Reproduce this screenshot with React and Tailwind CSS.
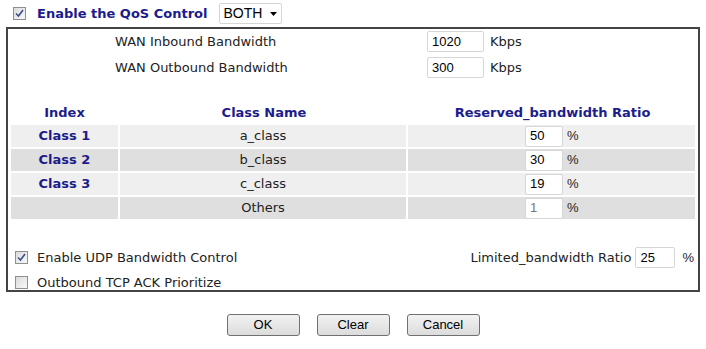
import React from 'react';

const label = "[font-family:'DejaVu_Sans',Verdana,sans-serif]";
const arial = "[font-family:'Liberation_Sans',Arial,sans-serif]";

function Check({ checked }) {
	return (
		<span className="inline-flex w-[13px] h-[13px] border border-[#8f8f8f] bg-gradient-to-br from-[#dcdcdc] to-[#f8f8f8] items-center justify-center shrink-0">
			{checked && (
				<svg width="9" height="9" viewBox="0 0 9 9">
					<path d="M1 4.5 L3.5 7 L8 1" fill="none" stroke="#3b4f8c" strokeWidth="1.6" />
				</svg>
			)}
		</span>
	);
}

function Box({ value, w, muted }) {
	return (
		<div className={`${arial} ${w} h-[21px] bg-white border border-[#d6d6d6] rounded-[2px] pl-[4px] flex items-center text-[13px] ${muted ? 'text-[#777]' : 'text-black'}`}>
			{value}
		</div>
	);
}

const rows = [
	{ idx: 'Class 1', name: 'a_class', ratio: '50', bg: 'bg-[#efefef]' },
	{ idx: 'Class 2', name: 'b_class', ratio: '30', bg: 'bg-[#dfdfdf]' },
	{ idx: 'Class 3', name: 'c_class', ratio: '19', bg: 'bg-[#efefef]' },
	{ idx: '', name: 'Others', ratio: '1', bg: 'bg-[#dfdfdf]', muted: true },
];

export default function App() {
	return (
		<div className={`w-[706px] h-[349px] bg-white ${label} text-[13px] text-[#222]`}>
			<div className="flex items-center h-[27px] pl-[13px]">
				<Check checked />
				<span className="ml-[11px] font-bold text-[#1c1c8c] text-[13px]">Enable the QoS Control</span>
				<div className={`${arial} ml-[12px] h-[21px] w-[63px] border border-[#d6d6d6] rounded-[2px] flex items-center pl-[3px] text-[14px] text-black`}>
					BOTH
					<svg className="ml-[8px]" width="7" height="4" viewBox="0 0 7 4"><path d="M0 0h7L3.5 4z" fill="#000" /></svg>
				</div>
			</div>
			<div className="mx-[6px] border-2 border-[#444] h-[265px] flex flex-col">
				<div className="flex flex-col gap-[5px] pt-[2px]">
					<div className="flex items-center">
						<span className="w-[419px] pl-[107px]">WAN Inbound Bandwidth</span>
						<Box value="1020" w="w-[57px]" />
						<span className="ml-[6px]">Kbps</span>
					</div>
					<div className="flex items-center">
						<span className="w-[419px] pl-[107px]">WAN Outbound Bandwidth</span>
						<Box value="300" w="w-[57px]" />
						<span className="ml-[6px]">Kbps</span>
					</div>
				</div>
				<div className="mt-[25px] mx-[3px] flex flex-col gap-[2px]">
					<div className="flex font-bold text-[#1c1c8c] h-[20px] items-center">
						<div className="w-[107px] text-center">Index</div>
						<div className="w-[292px] text-center">Class Name</div>
						<div className="flex-1 text-center">Reserved_bandwidth Ratio</div>
					</div>
					{rows.map((r) => (
						<div key={r.name} className="flex gap-[2px] h-[22px]">
							<div className={`${r.bg} w-[107px] flex items-center justify-center font-bold text-[#1c1c8c]`}>{r.idx}</div>
							<div className={`${r.bg} w-[286px] flex items-center justify-center`}>{r.name}</div>
							<div className={`${r.bg} flex-1 flex items-center pl-[117px]`}>
								<Box value={r.ratio} w="w-[38px]" muted={r.muted} />
								<span className={`${arial} ml-[4px]`}>%</span>
							</div>
						</div>
					))}
				</div>
				<div className="mt-[28px] flex items-center pl-[7px] pr-[4px]">
					<Check checked />
					<span className="ml-[9px]">Enable UDP Bandwidth Control</span>
					<span className="ml-auto">Limited_bandwidth Ratio</span>
					<div className="ml-[4px]"><Box value="25" w="w-[40px]" /></div>
					<span className={`${arial} ml-[7px]`}>%</span>
				</div>
				<div className="mt-[5px] flex items-center pl-[7px]">
					<Check />
					<span className="ml-[9px]">Outbound TCP ACK Prioritize</span>
				</div>
			</div>
			<div className={`${arial} flex justify-center gap-[17px] mt-[22px] text-[13px] text-black`}>
				{['OK', 'Clear', 'Cancel'].map((b) => (
					<button key={b} className="w-[73px] h-[22px] border border-[#707070] rounded-[3px] bg-gradient-to-b from-[#f2f2f2] to-[#dcdcdc]">{b}</button>
				))}
			</div>
		</div>
	);
}
